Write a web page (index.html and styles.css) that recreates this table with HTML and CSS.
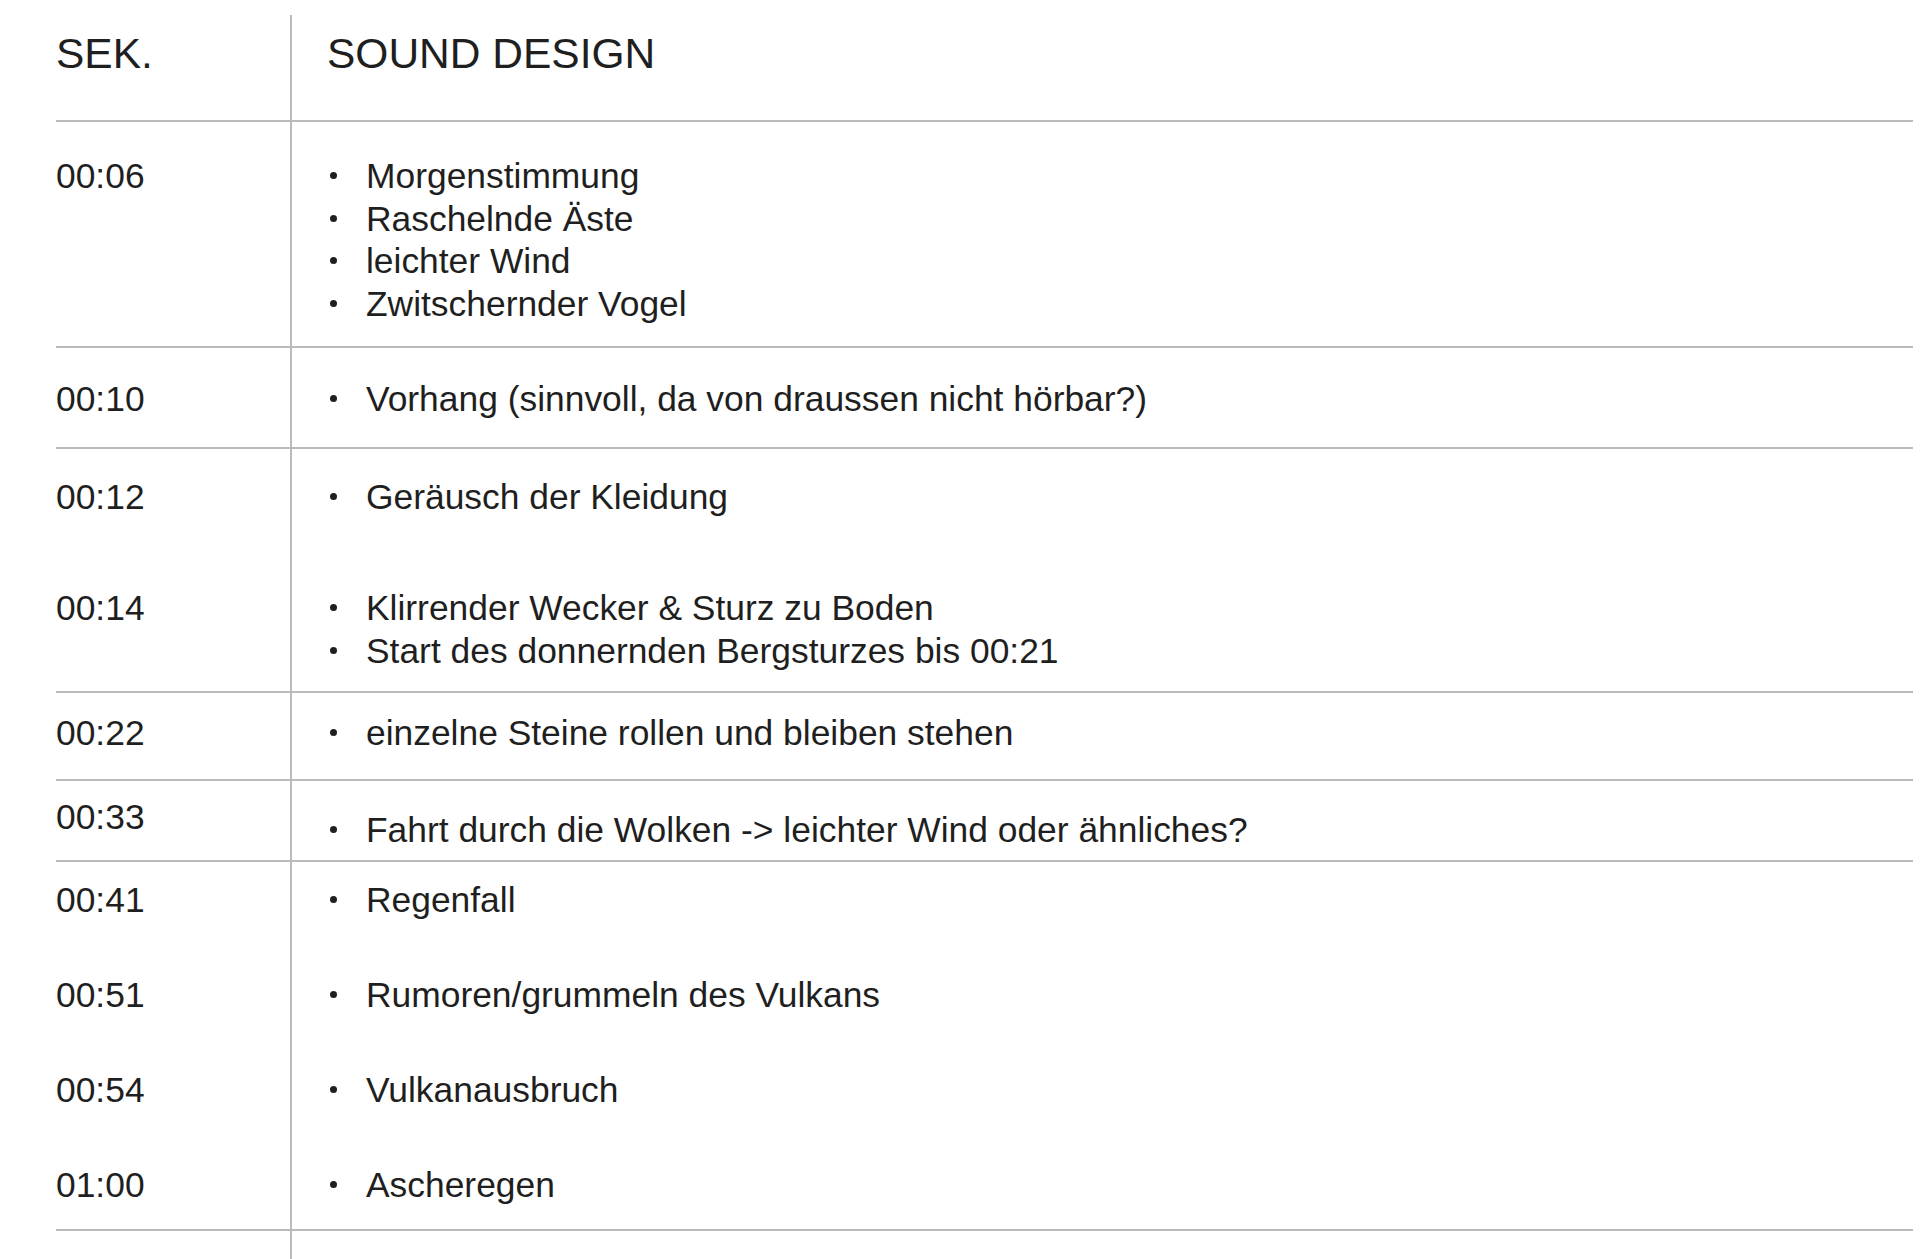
FILE: index.html
```html
<!DOCTYPE html>
<html lang="de">
<head>
<meta charset="utf-8">
<title>Sound Design</title>
<link rel="stylesheet" href="styles.css">
</head>
<body>
<div class="sheet">
  <div class="row head">
    <div class="time">SEK.</div>
    <div class="desc">SOUND DESIGN</div>
  </div>

  <div class="row r-a">
    <div class="entry">
      <div class="time">00:06</div>
      <ul class="desc list">
        <li>Morgenstimmung</li>
        <li>Raschelnde Äste</li>
        <li>leichter Wind</li>
        <li>Zwitschernder Vogel</li>
      </ul>
    </div>
  </div>

  <div class="row r-b">
    <div class="entry">
      <div class="time">00:10</div>
      <ul class="desc list">
        <li>Vorhang (sinnvoll, da von draussen nicht hörbar?)</li>
      </ul>
    </div>
  </div>

  <div class="row r-c">
    <div class="entry">
      <div class="time">00:12</div>
      <ul class="desc list">
        <li>Geräusch der Kleidung</li>
      </ul>
    </div>
    <div class="entry">
      <div class="time">00:14</div>
      <ul class="desc list">
        <li>Klirrender Wecker &amp; Sturz zu Boden</li>
        <li>Start des donnernden Bergsturzes bis 00:21</li>
      </ul>
    </div>
  </div>

  <div class="row r-d">
    <div class="entry">
      <div class="time">00:22</div>
      <ul class="desc list">
        <li>einzelne Steine rollen und bleiben stehen</li>
      </ul>
    </div>
  </div>

  <div class="row r-e">
    <div class="entry">
      <div class="time">00:33</div>
      <ul class="desc list list-low">
        <li>Fahrt durch die Wolken -&gt; leichter Wind oder ähnliches?</li>
      </ul>
    </div>
  </div>

  <div class="row r-f">
    <div class="entry">
      <div class="time">00:41</div>
      <ul class="desc list"><li>Regenfall</li></ul>
    </div>
    <div class="entry">
      <div class="time">00:51</div>
      <ul class="desc list"><li>Rumoren/grummeln des Vulkans</li></ul>
    </div>
    <div class="entry">
      <div class="time">00:54</div>
      <ul class="desc list"><li>Vulkanausbruch</li></ul>
    </div>
    <div class="entry">
      <div class="time">01:00</div>
      <ul class="desc list"><li>Ascheregen</li></ul>
    </div>
  </div>

  <div class="row tail">
    <div class="time"></div>
    <div class="desc"></div>
  </div>
</div>
</body>
</html>
```

FILE: styles.css
```css
html, body {
  margin: 0;
  padding: 0;
  background: #ffffff;
  overflow: hidden;
}

body {
  font-family: "Liberation Sans", Arial, Helvetica, sans-serif;
  color: #1f1f1f;
  font-size: 35.4px;
  line-height: 42.5px;
}

.sheet {
  margin-left: 56px;
  margin-top: 15px;
  width: 1857px;
}

.row {
  border-bottom: 2px solid #bababa;
  display: flex;
  flex-direction: column;
}

.entry,
.head,
.tail {
  display: flex;
}

.head,
.tail {
  flex-direction: row;
}

.time {
  width: 234px;
  flex: none;
}

.desc {
  flex: 1;
  border-left: 2px solid #bababa;
  margin: 0;
}

/* header */
.head {
  height: 105px;
  font-size: 42.5px;
  line-height: 50px;
}
.head .time,
.head .desc {
  padding-top: 14px;
}
.head .desc {
  padding-left: 35px;
}

/* bullet list */
.list {
  list-style: none;
  padding: 0;
}
.list li {
  display: flex;
  align-items: flex-start;
}
.list li::before {
  content: "";
  flex: none;
  width: 7px;
  height: 7px;
  border-radius: 50%;
  background: #1f1f1f;
  margin-left: 38px;
  margin-right: 29px;
  margin-top: 17px;
}

/* rows: the vertical rule runs through padding, so padding sits on cells */
.r-a .time,
.r-a .desc { padding-top: 33px; padding-bottom: 21px; }

.r-b .time,
.r-b .desc { padding-top: 30px; padding-bottom: 26px; }

.r-c .entry:first-child .time,
.r-c .entry:first-child .desc { padding-top: 27px; padding-bottom: 34px; }
.r-c .entry:last-child .time,
.r-c .entry:last-child .desc { padding-top: 35px; padding-bottom: 19px; }

.r-d .time,
.r-d .desc { padding-top: 19px; padding-bottom: 24.5px; }

.r-e .time { padding-top: 15px; }
.r-e .desc { padding-top: 15px; padding-bottom: 8.5px; }
.r-e .list-low li { margin-top: 13px; }

.r-f .entry .time,
.r-f .entry .desc { padding-top: 26.4px; padding-bottom: 26.4px; }
.r-f .entry:first-child .time,
.r-f .entry:first-child .desc { padding-top: 16.5px; }
.r-f .entry:last-child .time,
.r-f .entry:last-child .desc { padding-bottom: 22px; }

.tail {
  height: 60px;
  border-bottom: none;
}
```
